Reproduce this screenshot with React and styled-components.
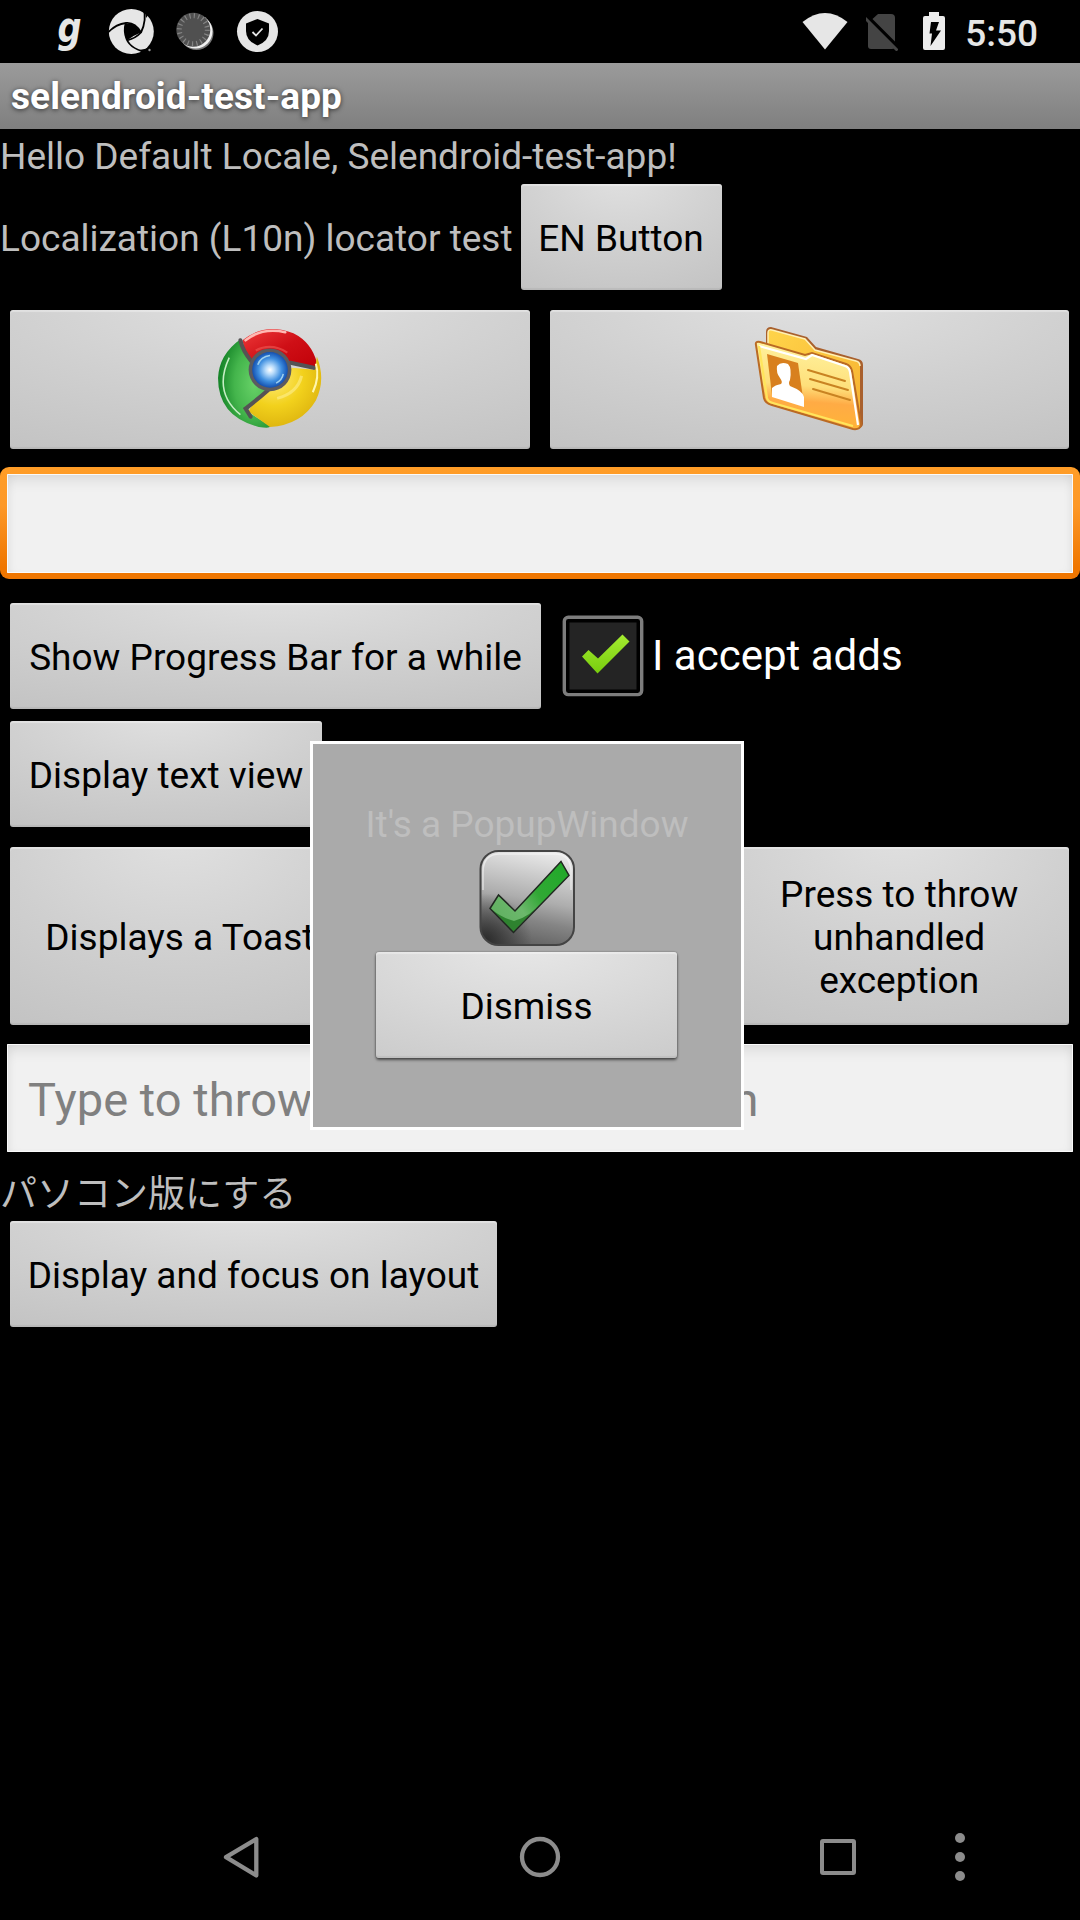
import React from 'react';
import styled, { createGlobalStyle } from 'styled-components';

const GlobalStyle = createGlobalStyle`
  * { box-sizing: border-box; }
  html, body { margin: 0; background: #000; }
  body { font-family: Roboto, "Noto Sans CJK JP", sans-serif; font-size: 37px; }
`;

const Screen = styled.div`
  position: relative;
  display: flex;
  flex-direction: column;
  width: 1080px;
  height: 1920px;
  background: #000;
  overflow: hidden;
`;

const StatusBar = styled.header`
  display: flex;
  align-items: flex-start;
  justify-content: space-between;
  height: 63px;
  padding: 0 42px 0 52px;
  flex: none;
`;

const StatusGroup = styled.div`
  display: flex;
  height: 63px;
  gap: ${(p) => p.$gap}px;
`;

const Clock = styled.span`
  margin-left: 3px;
  line-height: 67px;
  font-weight: 500;
  color: #e6e6e6;
`;

const TitleBar = styled.h1`
  flex: none;
  height: 66px;
  margin: 0;
  padding-left: 11px;
  background: linear-gradient(#9b9b9b, #7f7f7f);
  color: #fff;
  font-size: 37px;
  font-weight: 700;
  letter-spacing: 0.08px;
  line-height: 67px;
  text-shadow: 0 1px 5px rgba(0, 0, 0, 0.65);
`;

const Content = styled.main`
  display: flex;
  flex-direction: column;
  flex: 1;
`;

const Label = styled.div`
  height: ${(p) => p.$height}px;
  line-height: ${(p) => p.$line}px;
  color: #bebebe;
  white-space: nowrap;
`;

const Row = styled.div`
  display: flex;
  align-items: stretch;
  gap: ${(p) => p.$gap || 0}px;
  padding: ${(p) => p.$padding || '0 10px'};
`;

const Triple = styled.div`
  display: grid;
  grid-template-columns: repeat(3, 1fr);
  gap: 20px;
  height: 178px;
  margin-top: 20px;
  padding: 0 11px 0 10px;
`;

const Pair = styled.div`
  display: grid;
  grid-template-columns: 1fr 1fr;
  gap: 20px;
  height: 139px;
  margin-top: 20px;
  padding: 0 11px 0 10px;
`;

const Button = styled.button`
  display: flex;
  align-items: center;
  justify-content: center;
  width: ${(p) => (p.$width ? `${p.$width}px` : 'auto')};
  height: ${(p) => (p.$fill ? 'auto' : '106px')};
  margin: 0;
  padding: ${(p) => p.$padding || '2px 0 0'};
  border: 0;
  border-radius: 3px;
  background: radial-gradient(
    ellipse 95% 125% at 50% -10%,
    rgba(234, 234, 234, 0.96) 0%,
    rgba(219, 219, 219, 0.95) 55%,
    rgba(206, 206, 206, 0.95) 100%
  );
  box-shadow: inset 0 2px 1px rgba(255, 255, 255, 0.35), inset 0 -2px 1px rgba(0, 0, 0, 0.06),
    0 2px 3px rgba(0, 0, 0, 0.55), 0 0 2px rgba(0, 0, 0, 0.4);
  color: #000;
  font-family: inherit;
  font-size: 37px;
  line-height: 43px;
  text-align: center;
  white-space: nowrap;
`;

const FocusRing = styled.div`
  height: 112px;
  margin-top: 18px;
  padding: 7px 7px 6px;
  border-radius: 9px;
  background: linear-gradient(#ff9d27 0%, #fd9827 35%, #ef7600 90%);
`;

const Field = styled.input`
  display: block;
  width: 100%;
  height: ${(p) => p.$height}px;
  margin: 0;
  padding: 2px 21px 0;
  border: 0;
  border-radius: 1px;
  outline: 0;
  background: #f1f1f1;
  box-shadow: inset 0 0 0 1px #fafafa, inset 0 12px 16px -8px rgba(0, 0, 0, 0.12),
    inset 6px 0 12px -6px rgba(0, 0, 0, 0.08), inset -6px 0 12px -6px rgba(0, 0, 0, 0.08);
  color: #000;
  font-family: inherit;
  font-size: 47px;
  letter-spacing: 0.04px;
  &::placeholder { color: #808080; opacity: 1; }
`;

const FieldRow = styled.div`
  padding: 0 7px;
  margin-top: 19px;
`;

const CheckLabel = styled.label`
  display: flex;
  align-items: center;
  height: 106px;
  color: #fff;
  font-size: 42px;
  gap: 7px;
`;

const CheckText = styled.span`
  padding-bottom: 2px;
`;

const Popup = styled.section`
  position: absolute;
  left: 310px;
  top: 741px;
  width: 434px;
  height: 389px;
  display: flex;
  flex-direction: column;
  align-items: center;
  padding-top: 55px;
  border: 3px solid #fff;
  background: #aaa;
`;

const NavBar = styled.nav`
  display: flex;
  align-items: center;
  height: 126px;
  padding-left: 220px;
`;

const NavButton = styled.span`
  display: flex;
  margin-left: ${(p) => p.$before}px;
`;

const NewsIcon = () => (
  <svg width="38" height="63" viewBox="51 0 38 63">
    <text x="0" y="0" transform="translate(56.500 41.500) scale(0.78 1)" fontFamily="DejaVu Sans" fontSize="43" fontWeight="700" fontStyle="italic" fill="#e6e6e6">g</text>
  </svg>
);

const ApertureIcon = () => (
  <svg width="48" height="63" viewBox="108 0 48 63">
    <circle cx="131.3" cy="31.5" r="22.5" fill="#e6e6e6" />
    <path d="M125.500 24Q134 21 141 32.500Q134 35 127 40.500Q123 32 125.500 24Z" fill="#000" />
    <g fill="none" stroke="#000" strokeWidth="1.800">
      <path d="M108 32.500Q116 24 126 23Q135 22 141 32.500" />
      <path d="M143.500 8Q147 20 141 32.500Q136 38 127 40.500" />
      <path d="M150 53Q131 50 126.500 39Q123.500 31 125.500 24" />
    </g>
    <path d="M143.500 8L149 14L146 18Q145.500 12 143.500 8ZM139 50L150 48L146 55Z" fill="#000" />
    <circle cx="149.500" cy="50" r="1.200" fill="#999" />
  </svg>
);

const DialIcon = () => (
  <svg width="42" height="63" viewBox="173 0 42 63">
    <circle cx="195.5" cy="33" r="17" fill="#777" />
    <circle cx="194.5" cy="31.5" r="17" fill="#f0f0f0" />
    <circle cx="192.3" cy="29.7" r="17" fill="#505050" />
    <circle cx="192.3" cy="29.7" r="14" fill="none" stroke="#858585" strokeWidth="5" strokeDasharray="1.2 3.2" />
  </svg>
);

const ShieldIcon = () => (
  <svg width="44" height="63" viewBox="234 0 44 63">
    <circle cx="257.500" cy="31.500" r="20.500" fill="#e6e6e6" />
    <path d="M257.500 19L269 23.500V31Q269 41 257.500 45.500Q246 41 246 31V23.500Z" fill="#000" />
    <path d="M252.500 32L256 35.500L262.500 28.500" fill="none" stroke="#e6e6e6" strokeWidth="1.800" />
  </svg>
);

const WifiIcon = () => (
  <svg width="47" height="63" viewBox="801 0 47 63">
    <path d="M801.500 22Q824 4 846.500 22L824 49.500Z" fill="#e6e6e6" />
  </svg>
);

const NoSimIcon = () => (
  <svg width="36" height="63" viewBox="866 0 36 63">
    <path d="M878 14H891Q895 14 895 18V46Q895 49 892 49H871Q868 49 868 46V23Z" fill="#444" />
    <path d="M866 15.500L899 48.500" stroke="#000" strokeWidth="4" />
    <path d="M865.500 18.500L896.500 49.500" stroke="#444" strokeWidth="3" strokeLinecap="round" />
  </svg>
);

const BatteryIcon = () => (
  <svg width="26" height="63" viewBox="919 0 26 63">
    <path d="M929 12H939V16H943Q945 16 945 18V48Q945 50 943 50H925Q923 50 923 48V18Q923 16 925 16H929Z" fill="#ececec" />
    <path d="M931 22H939L936 30.500H941L930.500 46L932 33.500H929.500Z" fill="#000" />
  </svg>
);

const BrowserIcon = () => (
  <svg width="108" height="102" viewBox="0 0 106 100">
    <defs>
      <linearGradient id="red" x1="0" y1="0" x2="1" y2="1"><stop offset="0" stopColor="#ef3b3b" /><stop offset=".5" stopColor="#cf0f16" /><stop offset="1" stopColor="#c00008" /></linearGradient>
      <radialGradient id="green" cx=".7" cy=".5" r=".7"><stop offset="0" stopColor="#68d268" /><stop offset=".55" stopColor="#44b54c" /><stop offset="1" stopColor="#138226" /></radialGradient>
      <radialGradient id="yellow" cx=".35" cy=".3" r=".8"><stop offset="0" stopColor="#ffec7a" /><stop offset=".5" stopColor="#f2d11c" /><stop offset="1" stopColor="#d9ae0c" /></radialGradient>
      <radialGradient id="blue"><stop offset="0" stopColor="#fff" /><stop offset=".25" stopColor="#b9dcfb" /><stop offset=".65" stopColor="#3f8fe0" /><stop offset="1" stopColor="#1450b0" /></radialGradient>
    </defs>
    <path d="M24 12Q3 27 2 50Q2 88 42 98Q54 100 53 97L31 83Q32 78 50 62L36 42Q32 24 24 12Z" fill="url(#green)" />
    <path d="M26 13Q48-5 76 6Q94 15 99 35L98 42L72 34Q62 23 47 26Q38 30 35 37Q28 25 26 13Z" fill="url(#red)" />
    <path d="M99 29Q108 52 98 72Q84 96 53 98L32 83Q34 76 52 61Q71 59 74 40L97 42Z" fill="url(#yellow)" />
    <path d="M24 13Q26 23 35 34M73 35L96 40M51 62Q42 70 29 80L34 88" fill="none" stroke="#555354" strokeWidth="4" strokeLinecap="round" />
    <path d="M29 13Q45 0 68 5" fill="none" stroke="#ffb9b3" strokeWidth="2.500" strokeLinecap="round" />
    <path d="M13 30Q-3 64 24 86" fill="none" stroke="#c6eec5" strokeWidth="1.500" />
    <path d="M98 36Q102 49 95 64" fill="none" stroke="#fff6ae" strokeWidth="2" />
    <path d="M39 23Q54 15 70 25" fill="none" stroke="#ee5a55" strokeWidth="2" opacity=".6" />
    <path d="M60 70Q80 65 84 48" fill="none" stroke="#fff4a0" strokeWidth="3" opacity=".5" />
    <circle cx="53" cy="42" r="21" fill="#5c5b60" />
    <circle cx="53" cy="42" r="17.500" fill="url(#blue)" />
    <path d="M41 37Q44 29 53 28M66 46Q65 52 59 55" fill="none" stroke="#9ed0ef" strokeWidth="1.500" />
  </svg>
);

const ContactsIcon = () => (
  <svg width="112" height="106" viewBox="0 0 112 106">
    <defs>
      <linearGradient id="front" x1=".5" y1="0" x2=".4" y2="1"><stop offset="0" stopColor="#fff3a0" /><stop offset=".5" stopColor="#fedf7a" /><stop offset=".68" stopColor="#ffab45" /><stop offset="1" stopColor="#ffb536" /></linearGradient>
      <linearGradient id="folder" x1="0" y1="0" x2="1" y2="1"><stop offset="0" stopColor="#ffd44a" /><stop offset="1" stopColor="#f6b02e" /></linearGradient>
    </defs>
    <path d="M12 7Q12 2 17 2L53 12L62 22L104 34Q109 35 109 40V99Q109 102 104 104L12 60Z" fill="#a9602d" />
    <path d="M14 8Q14 4 18 5L51 14L61 25L102 36Q106 37 106 41V99L14 56Z" fill="url(#folder)" />
    <path d="M14 20V8Q14 4 18 5L51 14L61 25L102 36Q106 37 106 41" fill="none" stroke="#fff0b4" strokeWidth="1.500" />
    <path d="M2 20Q1 16 6 17L51 30L58 28L92 39Q97 41 98 46L107 99Q107 105 99 104L18 80Q11 78 10 73Z" fill="url(#front)" stroke="#ba6a24" strokeWidth="2" />
    <path d="M5 21L52 34L58 30L91 41Q95 42 96 47L104 100" fill="none" stroke="#fff" strokeWidth="2.200" />
    <path d="M5 21L13 73Q14 77 19 78L99 101" fill="none" stroke="#ffe55c" strokeWidth="2.200" />
    <path d="M13 29L44 38L50 80L18 70Z" fill="#d8801e" />
    <path d="M23 41Q27 36 34 39Q38 43 36 55Q34 58 36 61Q49 66 50 72V82L18 72V63Q21 60 27 59Q29 57 26 53Q22 48 23 41Z" fill="#fff" />
    <path d="M54 45L91 56M56 54L94 65M59 64L96 75" stroke="#c98322" strokeWidth="2" strokeLinecap="round" />
  </svg>
);

const CheckBoxIcon = () => (
  <svg width="84" height="84" viewBox="561 613.500 84 84">
    <defs><linearGradient id="lime" x1="0" y1="0" x2="0" y2="1"><stop offset="0" stopColor="#a4ec30" /><stop offset="1" stopColor="#78cc0e" /></linearGradient></defs>
    <rect x="564.300" y="616.700" width="77.400" height="77.400" rx="4" fill="#000" stroke="#7d7d7d" strokeWidth="3.400" />
    <rect x="569.500" y="622" width="67" height="67" fill="#242424" />
    <path d="M582 656L588.500 649.500L598 658L622.500 634L629.500 641L597.500 673Z" fill="url(#lime)" />
  </svg>
);

const TickBadge = () => (
  <svg width="97" height="98" viewBox="479 849 97 98">
    <defs>
      <linearGradient id="metal" x1=".6" y1="0" x2=".4" y2="1"><stop offset="0" stopColor="#e9e9e9" /><stop offset=".5" stopColor="#aeaeae" /><stop offset=".72" stopColor="#858585" /><stop offset="1" stopColor="#606060" /></linearGradient>
      <radialGradient id="dark" cx=".05" cy=".95" r=".5"><stop offset="0" stopColor="#222" stopOpacity=".85" /><stop offset="1" stopColor="#222" stopOpacity="0" /></radialGradient>
      <linearGradient id="tick" x1="0" y1=".8" x2="1" y2=".2"><stop offset="0" stopColor="#5fae5f" /><stop offset=".35" stopColor="#6cb86c" /><stop offset=".6" stopColor="#31a835" /><stop offset="1" stopColor="#22a92a" /></linearGradient>
    </defs>
    <rect x="480.500" y="851" width="93.500" height="94" rx="18" fill="url(#metal)" />
    <rect x="480.500" y="851" width="93.500" height="94" rx="18" fill="url(#dark)" stroke="#444" strokeWidth="2" />
    <path d="M483 890V872Q483 854 500 854H555Q571 854 571 872V890" fill="none" stroke="#f8f8f8" strokeWidth="1.500" opacity=".6" />
    <path d="M490 908.500L498.500 895L515 911L561 861.500L569 875.500L513.500 932.500Z" fill="url(#tick)" />
    <path d="M491 909L513.500 932L544 900Q530 917 514 921Q502 918 491 909Z" fill="#176d18" opacity=".7" />
    <path d="M490 908.500L498.500 895L515 911L561 861.500L569 875.500L513.500 932.500Z" fill="none" stroke="#202820" strokeWidth="1.500" />
  </svg>
);

const BackIcon = () => (
  <svg width="44" height="44" viewBox="220 1835 44 44"><path d="M256.300 1839V1875.500L226 1857.200Z" fill="none" stroke="#8c8c8c" strokeWidth="4.300" strokeLinejoin="round" /></svg>
);
const HomeIcon = () => (
  <svg width="44" height="44" viewBox="518 1835 44 44"><circle cx="540" cy="1857" r="18" fill="none" stroke="#8c8c8c" strokeWidth="4.300" /></svg>
);
const RecentIcon = () => (
  <svg width="44" height="44" viewBox="816 1835 44 44"><rect x="822" y="1841" width="32" height="32" rx="1" fill="none" stroke="#8c8c8c" strokeWidth="4" strokeLinejoin="round" /></svg>
);
const MoreIcon = () => (
  <svg width="20" height="52" viewBox="949.500 1831 20 52" fill="#8c8c8c"><circle cx="959.500" cy="1838" r="5" /><circle cx="959.500" cy="1857" r="5" /><circle cx="959.500" cy="1876" r="5" /></svg>
);

export default function App() {
  return (
    <>
      <GlobalStyle />
      <Screen>
        <StatusBar>
          <StatusGroup $gap={18}>
            <NewsIcon />
            <ApertureIcon />
            <DialIcon />
            <ShieldIcon />
          </StatusGroup>
          <StatusGroup $gap={17}>
            <WifiIcon />
            <NoSimIcon />
            <BatteryIcon />
            <Clock>5:50</Clock>
          </StatusGroup>
        </StatusBar>
        <TitleBar>selendroid-test-app</TitleBar>
        <Content>
          <Label $height={55} $line={55}>Hello Default Locale, Selendroid-test-app!</Label>
          <Row $padding="0" $gap={8}>
            <Label $height={106} $line={109}>Localization (L10n) locator test</Label>
            <Button $width={201}>EN Button</Button>
          </Row>
          <Pair>
            <Button $fill $padding="0 0 3px" aria-label="Browser"><BrowserIcon /></Button>
            <Button $fill $padding="0 0 4px 2px" aria-label="Contacts"><ContactsIcon /></Button>
          </Pair>
          <FocusRing><Field $height={99} /></FocusRing>
          <Row $gap={20} $padding="24px 0 0 10px">
            <Button $width={531}>Show Progress Bar for a while</Button>
            <CheckLabel><CheckBoxIcon /><CheckText>I accept adds</CheckText></CheckLabel>
          </Row>
          <Row $padding="12px 0 0 10px">
            <Button $width={312}>Display text view</Button>
          </Row>
          <Triple>
            <Button $fill>Displays a Toast</Button>
            <Button $fill />
            <Button $fill>Press to throw<br />unhandled<br />exception</Button>
          </Triple>
          <FieldRow><Field $height={108} placeholder="Type to throw unhandled exception" /></FieldRow>
          <Label $height={69} $line={86}>パソコン版にする</Label>
          <Row>
            <Button $width={487}>Display and focus on layout</Button>
          </Row>
        </Content>
        <Popup>
          <Label $height={50} $line={52}>It's a PopupWindow</Label>
          <TickBadge />
          <Row $padding="5px 1px 0 0">
            <Button $width={301}>Dismiss</Button>
          </Row>
        </Popup>
        <NavBar>
          <NavButton $before={0}><BackIcon /></NavButton>
          <NavButton $before={254}><HomeIcon /></NavButton>
          <NavButton $before={254}><RecentIcon /></NavButton>
          <NavButton $before={89.5}><MoreIcon /></NavButton>
        </NavBar>
      </Screen>
    </>
  );
}
